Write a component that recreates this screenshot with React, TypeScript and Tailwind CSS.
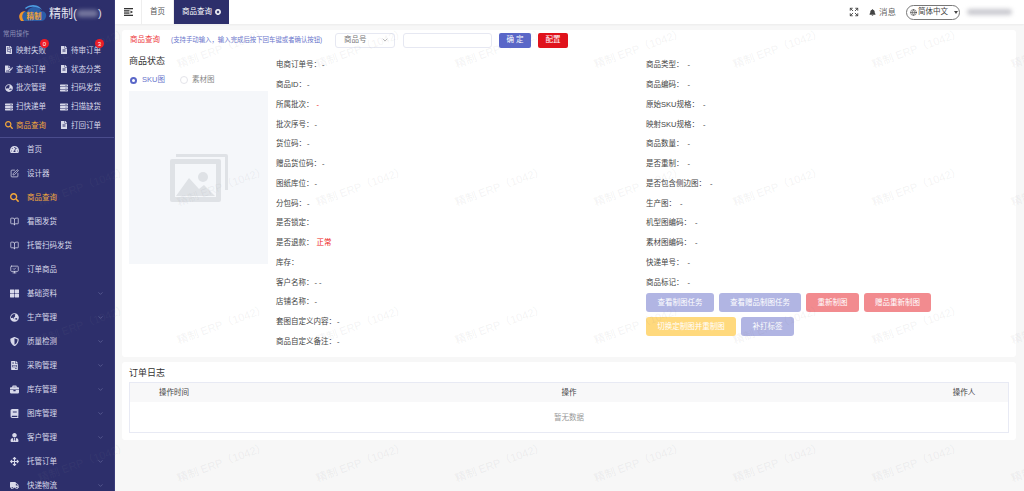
import React from "react";
import { BookOpen, ChevronDown, Expand, Globe, MonitorCheck, SquarePen } from "lucide-react";
import {
  FaArrowsAlt, FaBell, FaBook, FaBriefcase, FaFileAlt, FaFileInvoice, FaFileSignature, FaGlobeAsia, FaSearch, FaServer, FaShieldAlt, FaTachometerAlt, FaThLarge, FaTimesCircle, FaTruck, FaUserTie,
} from "react-icons/fa";

const quick: [string, any, number?, boolean?][] = [
  ["映射失败", FaFileInvoice, 0], ["待审订单", FaFileAlt, 3],
  ["查询订单", FaFileSignature], ["状态分类", FaFileAlt],
  ["批次管理", FaGlobeAsia], ["扫码发货", FaServer],
  ["扫快递单", FaServer], ["扫描缺货", FaServer],
  ["商品查询", FaSearch, undefined, true], ["打回订单", FaFileAlt],
];

const menu: [string, any, boolean?, boolean?][] = [
  ["首页", FaTachometerAlt], ["设计器", SquarePen], ["商品查询", FaSearch, false, true], ["看图发货", BookOpen],
  ["托管扫码发货", BookOpen], ["订单商品", MonitorCheck], ["基础资料", FaThLarge, true], ["生产管理", FaGlobeAsia, true],
  ["质量检测", FaShieldAlt, true], ["采购管理", FaFileInvoice, true], ["库存管理", FaBriefcase, true], ["图库管理", FaBook, true],
  ["客户管理", FaUserTie, true], ["托管订单", FaArrowsAlt, true], ["快递物流", FaTruck, true],
];

const left: [string, string, boolean?][] = [
  ["电商订单号：", "-"], ["商品ID：", "-"], ["所属批次：", "-", true], ["批次序号：", "-"], ["货位码：", "-"], ["赠品货位码：", "-"],
  ["图纸库位：", "-"], ["分包码：", "-"], ["是否锁定：", ""], ["是否退款：", "正常", true], ["库存：", ""], ["客户名称：", "- -"],
  ["店铺名称：", "-"], ["套图自定义内容：", "-"], ["商品自定义备注：", "-"],
];
const right: [string, string][] = [
  ["商品类型：", "-"], ["商品编码：", "-"], ["原始SKU规格：", "-"], ["映射SKU规格：", "-"], ["商品数量：", "-"], ["是否重制：", "-"],
  ["是否包含侧边图：", "-"], ["生产图：", "-"], ["机型图编码：", "-"], ["素材图编码：", "-"], ["快递单号：", "-"], ["商品标记：", "-"],
];

function Row({ label, value, red, wide }: { label: string; value: string; red?: boolean; wide?: boolean }) {
  return (
    <div className="h-[19.75px] flex items-center text-[7.5px] text-[#444] whitespace-pre">
      <span>{label}</span>
      <span className={red ? "text-[#ee1c25] ml-[3px]" : wide ? "ml-[4px]" : "ml-px"}>{value}</span>
    </div>
  );
}

function Btn({ text, cls }: { text: string; cls: string }) {
  return <div className={`h-[19px] rounded-[3px] flex items-center justify-center text-[7.5px] text-white ${cls}`}>{text}</div>;
}

export default function App() {
  return (
    <div
      className="relative flex w-[1024px] h-[491px] overflow-hidden bg-[#f7f7f7] text-[#444]"
      style={{ fontFamily: '"Liberation Sans","Noto Sans CJK SC",sans-serif' }}
    >
      <aside className="w-[115px] shrink-0 h-full bg-[#2d2f6b] border-r border-[#3a3c7a] overflow-hidden text-[#d8d9ea]">
        <div className="h-[27px] flex items-center pl-[17px]">
          <svg width="31" height="22" viewBox="0 0 31 22" className="shrink-0">
            <path d="M5 17C2 13 5 8 10 9c2-6 12-7 14-1 4 0 6 3 5 6-1 3-3 4-5 4H8c-1 0-2 0-3-1z" fill="#2b5ea8" />
            <path d="M9 6C6 5 12 2 16 2c5 0 8 3 9 5-3-3-12-5-16-1z" fill="#4c9be0" />
            <path d="M4 18C0 13 3 8 9 8 5 10 4 14 7 18z" fill="#f0962a" />
            <text x="17" y="16" textAnchor="middle" fontSize="7.5" fontWeight="700" fill="#f2a43a">精制</text>
          </svg>
          <span className="ml-px text-[12px] leading-none text-[#e6e6f2]">精制(</span>
          <span className="w-[21px] h-[7px] bg-[#77799f] rounded-sm blur-[2px]" />
          <span className="text-[11px] leading-none text-[#e6e6f2]">)</span>
        </div>
        <div className="pl-[3px] h-[13px] flex items-center text-[6.5px] text-[#8e90b6]">常用操作</div>
        <div className="grid grid-cols-[55px_55px] pl-[5px] pt-px pb-[2px] auto-rows-[18.75px] border-b border-[#4a4c8c]">
          {quick.map(([t, Icon, badge, active]) => (
            <div key={t} className={`relative flex items-center gap-[3px] text-[7.5px] ${active ? "text-[#f3a73b]" : ""}`}>
              <Icon size={8} className="shrink-0" />
              <span>{t}</span>
              {badge !== undefined && (
                <span className="absolute left-[35px] -top-[2px] w-[9px] h-[9px] rounded-full bg-[#ee1c25] text-white text-[6px] leading-none flex items-center justify-center">{badge}</span>
              )}
            </div>
          ))}
        </div>
        <div>
          {menu.map(([t, Icon, arrow, active]) => (
            <div key={t} className={`h-[24px] pl-[10px] pr-[10px] flex items-center text-[7.5px] ${active ? "text-[#f3a73b]" : ""}`}>
              <Icon size={9} className="shrink-0" />
              <span className="ml-[8px] flex-1">{t}</span>
              {arrow && <ChevronDown size={7} className="text-[#6f71a3]" />}
            </div>
          ))}
        </div>
      </aside>

      <div className="flex-1 min-w-0 flex flex-col">
        <header className="h-[24px] bg-white shadow-[0_1px_2px_rgba(0,0,0,0.05)] flex items-stretch shrink-0">
          <div className="w-[26px] flex items-center justify-center">
            <svg width="9" height="8" viewBox="0 0 9 8" fill="#333">
              <rect width="9" height="1.3" />
              <rect y="2.2" width="5.5" height="1.3" />
              <rect y="4.4" width="5.5" height="1.3" />
              <rect y="6.7" width="9" height="1.3" />
              <path d="M6.5 2.4L9 4 6.5 5.6z" />
            </svg>
          </div>
          <div className="w-[33px] border-x border-[#eee] flex items-center justify-center text-[7.5px] text-[#555]">首页</div>
          <div className="w-[55px] bg-[#2d2f6b] flex items-center justify-center gap-[3px] text-[7.5px] text-white">
            <span>商品查询</span>
            <FaTimesCircle size={6} />
          </div>
          <div className="flex-1" />
          <div className="flex items-center text-[#444]">
            <Expand size={10} strokeWidth={2.2} />
            <FaBell size={7} className="ml-[10px]" />
            <span className="ml-[3px] text-[8.5px] text-[#666]">消息</span>
            <div className="ml-[10px] w-[54px] h-[15px] rounded-full border border-[#777] flex items-center pl-[3px] text-[7.5px]">
              <Globe size={7} className="shrink-0" />
              <span className="ml-px whitespace-nowrap">简体中文</span>
              <span className="ml-[6px] border-x-[2px] border-t-[3px] border-x-transparent border-t-[#444]" />
            </div>
            <span className="ml-[7px] mr-[12px] w-[45px] h-[6px] bg-[#c9c9cf] rounded-sm blur-[2px]" />
          </div>
        </header>

        <main className="flex-1 pl-[7px] pr-[8px] pt-[6px] flex flex-col gap-[5px] min-h-0">
          <section className="h-[327px] bg-white rounded-[3px] pl-[8px] shrink-0">
            <div className="h-[20px] flex items-center">
              <span className="text-[7.5px] text-[#ee3b43] w-[41px] shrink-0">商品查询</span>
              <span className="text-[6.4px] text-[#6a76cc] w-[164px] shrink-0 whitespace-nowrap">(支持手动输入，输入完成后按下回车键或者确认按钮)</span>
              <div className="w-[60px] h-[15px] border border-[#e6e8f2] rounded-[3px] flex items-center justify-between pl-[8px] pr-[5px] text-[7.5px] text-[#777]">
                <span>商品号</span>
                <ChevronDown size={8} className="text-[#999]" />
              </div>
              <div className="ml-[8px] w-[89px] h-[15px] border border-[#e6e8f2] rounded-[3px]" />
              <div className="ml-[7px] w-[32px] h-[15px] rounded-[2px] bg-[#5a67c8] text-white text-[7.5px] flex items-center justify-center">确 定</div>
              <div className="ml-[7px] w-[30px] h-[15px] rounded-[2px] bg-[#e0131c] text-white text-[7.5px] flex items-center justify-center">配置</div>
            </div>
            <div className="flex pt-[4px]">
              <div className="w-[139px] -ml-px shrink-0">
                <div className="h-[15px] flex items-center text-[9px] text-[#333]">商品状态</div>
                <div className="h-[22px] flex items-center text-[7.5px] pl-px">
                  <span className="w-[7px] h-[7px] shrink-0 rounded-full border-[2px] border-[#5a67c8] bg-white" />
                  <span className="ml-[5px] text-[#6a76cc]">SKU图</span>
                  <span className="ml-[15px] w-[8px] h-[8px] shrink-0 rounded-full border border-[#e4e4ea]" />
                  <span className="ml-[4px] text-[#888]">素材图</span>
                </div>
                <div className="h-[173px] bg-[#f5f7fa] flex items-center justify-center">
                  <svg width="58" height="48" viewBox="0 0 58 48">
                    <path d="M6 0h50a2 2 0 0 1 2 2v34h-3V3H6z" fill="#dfe2e6" />
                    <path fillRule="evenodd" d="M2 5h47a2 2 0 0 1 2 2v39a2 2 0 0 1-2 2H2a2 2 0 0 1-2-2V7a2 2 0 0 1 2-2zm3 5v33h41V10z" fill="#dfe2e6" />
                    <path d="M6 42l13-18 10 11 5-4 11 11z" fill="#dfe2e6" />
                    <circle cx="33" cy="23" r="5" fill="#dfe2e6" />
                  </svg>
                </div>
              </div>
              <div className="ml-[8px] w-[370px] shrink-0 pt-px">
                {left.map(([l, v, r]) => <Row key={l} label={l} value={v} red={r} />)}
              </div>
              <div className="flex-1 pt-px">
                {right.map(([l, v]) => <Row key={l} label={l} value={v} wide />)}
                <div className="flex gap-[5px] mt-[1px]">
                  <Btn text="查看制图任务" cls="w-[68px] bg-[#b1b5e3]" />
                  <Btn text="查看赠品制图任务" cls="w-[82px] bg-[#b1b5e3]" />
                  <Btn text="重新制图" cls="w-[53px] bg-[#f28b8f]" />
                  <Btn text="赠品重新制图" cls="w-[67px] bg-[#f28b8f]" />
                </div>
                <div className="flex gap-[5px] mt-[5px]">
                  <Btn text="切换定制图并重制图" cls="w-[90px] bg-[#ffd97d]" />
                  <Btn text="补打标签" cls="w-[53px] bg-[#b1b5e3]" />
                </div>
              </div>
            </div>
          </section>

          <section className="h-[78px] bg-white rounded-[3px] px-[7px] shrink-0">
            <div className="h-[20px] pt-[4px] flex items-center text-[9px] text-[#333]">订单日志</div>
            <div className="h-[51px] border border-[#e8eaf4] text-[7.5px]">
              <div className="h-[19px] bg-[#f8f8f9] grid grid-cols-[88px_1fr_88px] items-center text-center text-[#444]">
                <span>操作时间</span><span>操作</span><span>操作人</span>
              </div>
              <div className="h-[31px] flex items-center justify-center text-[#999]">暂无数据</div>
            </div>
          </section>
        </main>
      </div>

      <div className="absolute -left-[103px] -top-[78px] w-[1250px] h-[720px] pointer-events-none overflow-hidden grid grid-cols-[repeat(9,139px)] auto-rows-[138px]">
        {Array.from({ length: 45 }).map((_, i) => (
          <div key={i} className="pt-[120px]">
            <span className="block w-[84px] whitespace-nowrap text-[11px] text-[rgba(130,130,140,0.1)] -rotate-[20deg]">精制 ERP（1042）</span>
          </div>
        ))}
      </div>
    </div>
  );
}
